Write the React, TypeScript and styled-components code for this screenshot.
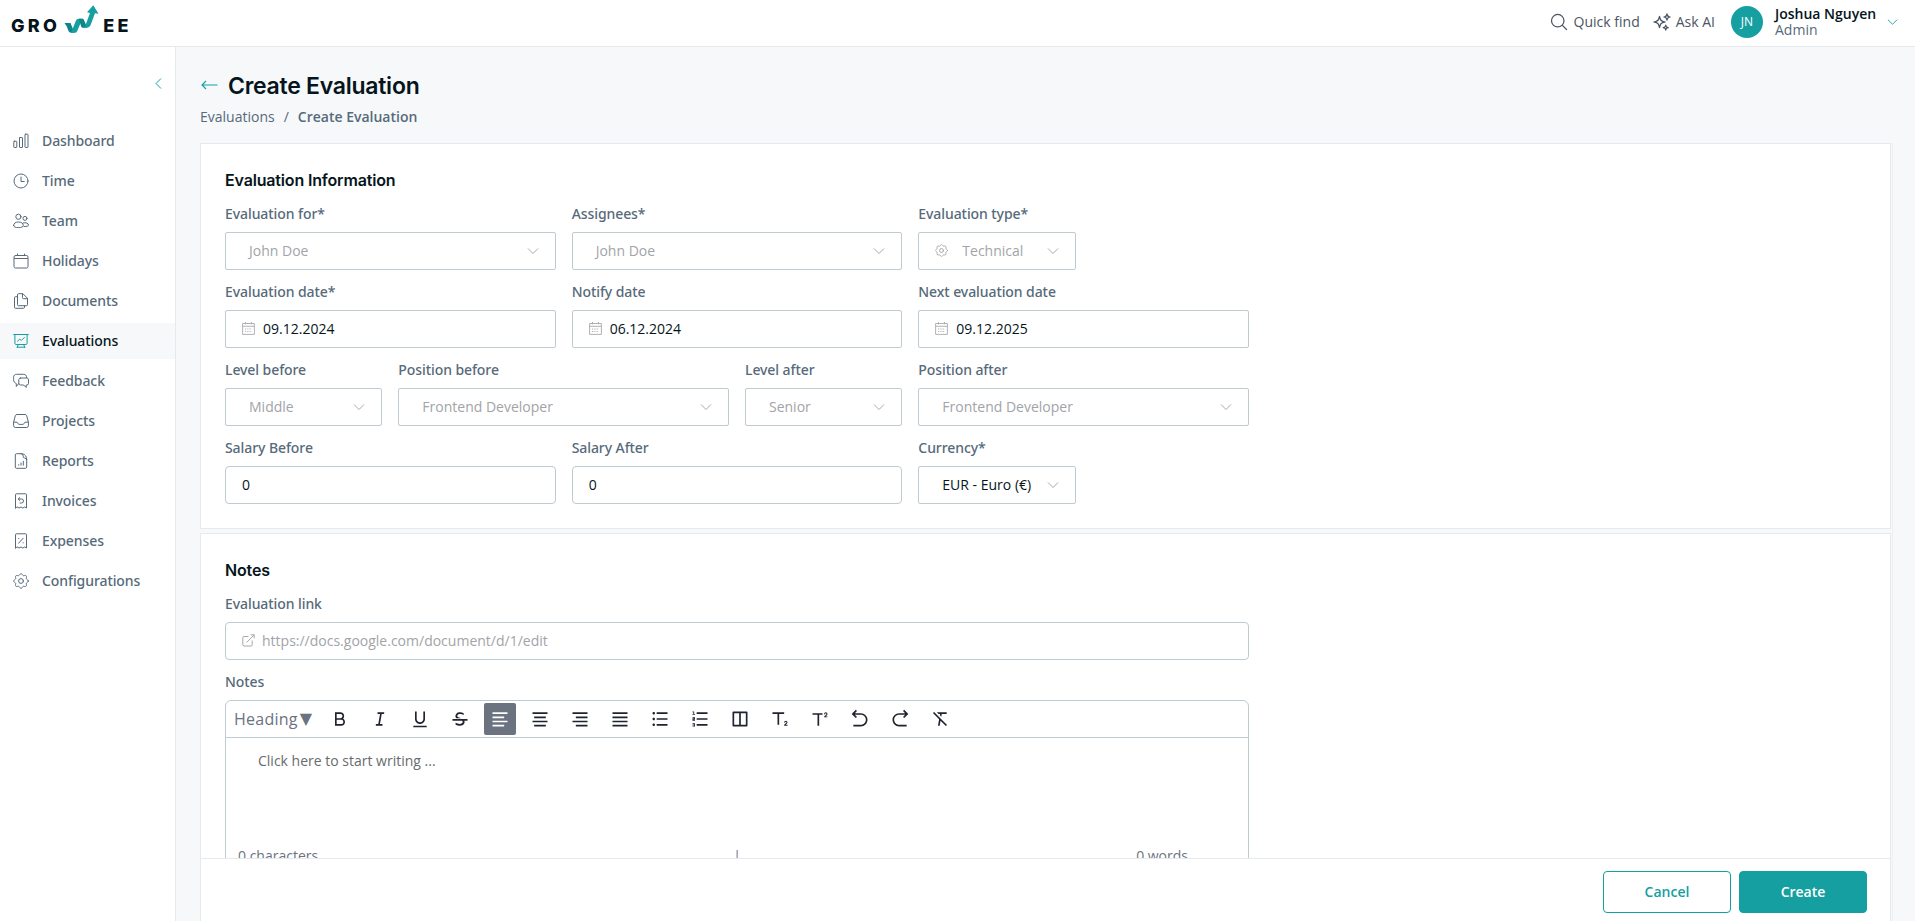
import React from "react";
import styled, { createGlobalStyle, css } from "styled-components";
import {
  RiBold, RiItalic, RiUnderline, RiStrikethrough, RiAlignLeft, RiAlignCenter, RiAlignRight,
  RiAlignJustify, RiListUnordered, RiListOrdered, RiLayoutColumnLine, RiSubscript2,
  RiSuperscript2, RiArrowGoBackLine, RiArrowGoForwardLine, RiFormatClear,
} from "react-icons/ri";
import { HiOutlineMagnifyingGlass, HiOutlineSparkles } from "react-icons/hi2";

const teal = "#159fa1";
const ink = "#06151b";
const slate = "#566a7a";
const muted = "#a2a4a8";
const line = "#bfcad1";
const hair = "#e4eaed";

const medium = css`
  font-family: "Noto Sans", "Open Sans", sans-serif;
  font-weight: 500;
  letter-spacing: -0.08px;
`;

const GlobalStyle = createGlobalStyle`
  *, *::before, *::after { box-sizing: border-box; }
  body {
    margin: 0;
    background: #f6f8fa;
    color: ${ink};
    font: 400 14px/20px "Open Sans", "Noto Sans", sans-serif;
    overflow: hidden;
  }
  svg { display: block; flex: none; }
  button, input { font: inherit; }
`;

const Page = styled.div`
  display: flex;
  flex-direction: column;
  height: 921px;
`;

const Header = styled.header`
  display: flex;
  align-items: center;
  justify-content: space-between;
  height: 47px;
  padding: 0 17px 2px 11px;
  background: #fff;
  border-bottom: 1px solid ${hair};
`;

const Logo = styled.div`
  display: flex;
  align-items: center;
  height: 44px;
  padding-top: 8px;
  font: 800 18px/20px Inter, sans-serif;
  letter-spacing: 3.3px;
  color: #06141c;
  svg { margin: -12px 3px 0 4px; }
`;

const HeaderActions = styled.div`
  display: flex;
  align-items: center;
`;

const HeaderLink = styled.button<{ $gap: number; $after: number }>`
  display: flex;
  align-items: center;
  gap: ${(p) => p.$gap}px;
  margin: 0 ${(p) => p.$after}px 0 0;
  padding: 0;
  border: 0;
  background: none;
  color: #4b5563;
`;

const Avatar = styled.div`
  display: grid;
  place-items: center;
  width: 32px;
  height: 32px;
  margin-right: 12px;
  border-radius: 50%;
  background: ${teal};
  color: #fff;
  font-size: 12px;
`;

const UserName = styled.div`
  width: 112px;
  line-height: 16px;
  color: ${slate};
  strong { display: block; font-weight: 600; color: ${ink}; white-space: nowrap; }
`;

const Body = styled.div`
  display: flex;
  flex: 1;
  min-height: 0;
`;

const Sidebar = styled.nav`
  width: 176px;
  background: #fff;
  border-right: 1px solid ${hair};
`;

const Collapse = styled.div`
  display: flex;
  justify-content: flex-end;
  height: 76px;
  padding: 31px 13px 0 0;
  color: ${teal};
`;

const NavItem = styled.a<{ $active?: boolean }>`
  display: flex;
  align-items: center;
  gap: 13px;
  height: 36px;
  margin-bottom: 4px;
  padding-left: 13px;
  ${medium}
  color: ${(p) => (p.$active ? ink : slate)};
  background: ${(p) => (p.$active ? "#f6f8fa" : "transparent")};
  svg { color: ${(p) => (p.$active ? teal : slate)}; }
`;

const Main = styled.main`
  display: flex;
  flex-direction: column;
  flex: 1;
  min-width: 0;
  padding: 24px 22px 0 24px;
`;

const TitleRow = styled.div`
  display: flex;
  align-items: center;
  gap: 10px;
  height: 28px;
  padding-left: 1px;
  color: ${teal};
`;

const Title = styled.h1`
  margin: 0;
  padding-top: 1px;
  font: 600 23px/28px Inter, sans-serif;
  letter-spacing: -0.26px;
  color: ${ink};
`;

const Breadcrumb = styled.div`
  display: flex;
  gap: 9px;
  height: 44px;
  padding-top: 8px;
  color: ${slate};
  strong { font-weight: 600; }
`;

const Panel = styled.div`
  display: flex;
  flex-direction: column;
  flex: 1;
  min-height: 0;
  padding-right: 1px;
  border-right: 1px solid #edf1f3;
`;

const Scroll = styled.div`
  flex: 1;
  min-height: 0;
  overflow: hidden;
`;

const Card = styled.section`
  margin-bottom: 4px;
  padding: 23px 24px 24px;
  background: #fff;
  border: 1px solid ${hair};
`;

const CardTitle = styled.h2`
  margin: 0 0 8px;
  font: 600 16px/26px Inter, sans-serif;
  letter-spacing: -0.16px;
`;

const Grid = styled.div`
  display: grid;
  grid-template-columns: repeat(6, 1fr);
  gap: 9px 16px;
  width: 1024px;
`;

const FieldBox = styled.div<{ $span: number; $start?: number }>`
  grid-column: ${(p) => (p.$start ? p.$start : "auto")} / span ${(p) => p.$span};
`;

const Label = styled.div`
  height: 31px;
  padding-top: 3px;
  ${medium}
  color: ${slate};
`;

const Control = styled.div<{ $left: number; $round?: boolean; $filled?: boolean }>`
  display: flex;
  align-items: center;
  height: 38px;
  padding: 0 16px 1px ${(p) => p.$left}px;
  border: 1px solid ${line};
  border-radius: ${(p) => (p.$round ? 4 : 2)}px;
  color: ${(p) => (p.$filled ? ink : muted)};
  background: #fff;
  white-space: nowrap;
  svg { color: #a7a9ad; }
`;

const Value = styled.span<{ $indent?: number }>`
  flex: 1;
  padding-left: ${(p) => p.$indent ?? 0}px;
`;

const Editor = styled.div`
  width: 1024px;
  height: 190px;
  border: 1px solid ${line};
  border-radius: 6px;
`;

const Toolbar = styled.div`
  display: flex;
  align-items: center;
  gap: 8px;
  height: 37px;
  padding-left: 8px;
  border-bottom: 1px solid ${line};
  color: #1f2330;
`;

const HeadingPicker = styled.div`
  display: flex;
  align-items: center;
  width: 82px;
  gap: 2px;
  font-size: 16px;
  letter-spacing: 0.25px;
  color: #6b7280;
  white-space: nowrap;
`;

const Caret = styled.span`
  font: 16px/20px "DejaVu Sans", sans-serif;
`;

const Tool = styled.button<{ $on?: boolean }>`
  display: grid;
  place-items: center;
  width: 32px;
  height: 32px;
  padding: 0;
  border: 0;
  border-radius: 2px;
  background: none;
  color: inherit;
  ${(p) => p.$on && css`background: #6b7280; color: #fff;`}
`;

const Writing = styled.div`
  height: 106px;
  padding: 13px 32px;
  color: #686b6e;
`;

const Counter = styled.div`
  display: flex;
  justify-content: space-between;
  padding: 2px 60px 0 12px;
  color: #6b7280;
  span:nth-child(2) { margin-left: 20px; }
`;

const Footer = styled.footer`
  display: flex;
  justify-content: flex-end;
  gap: 8px;
  height: 63px;
  padding: 12px 23px 0 0;
  background: #fff;
  border: 1px solid ${hair};
  border-bottom: 0;
`;

const Button = styled.button<{ $primary?: boolean }>`
  width: 128px;
  height: 42px;
  border: 1px solid ${teal};
  border-radius: 4px;
  font-weight: 600;
  color: ${(p) => (p.$primary ? "#fff" : teal)};
  background: ${(p) => (p.$primary ? teal : "#fff")};
`;

const Chevron = ({ width = 12 }: { width?: number }) => (
  <svg width={width} height="8" viewBox="0 0 12 8" fill="none" stroke="currentColor" strokeWidth="1">
    <path d="M1 1.500l5 5 5-5" />
  </svg>
);

/* Scalloped cog outline, built around the centre of a 16px box. */
const cogPath = (() => {
  const pts: string[] = [];
  for (let i = 0; i <= 96; i++) {
    const a = (i / 96) * Math.PI * 2;
    const r = 6.55 + 0.75 * Math.cos(8 * a);
    pts.push(`${(8 + r * Math.cos(a)).toFixed(2)} ${(8 + r * Math.sin(a)).toFixed(2)}`);
  }
  return `M${pts.join("L")}Z`;
})();

const LineIcon = ({ size = 16, children }: { size?: number; children: React.ReactNode }) => (
  <svg width={size} height={size} viewBox="0 0 16 16" fill="none" stroke="currentColor"
    strokeWidth={16 / size} strokeLinecap="round" strokeLinejoin="round">{children}</svg>
);

const Cog = ({ size = 16 }: { size?: number }) => (
  <LineIcon size={size}><path d={cogPath} /><circle cx="8" cy="8" r="2.4" /></LineIcon>
);

const receipt = "M2.5 15V1.8Q2.5.8 3.5.8h9q1 0 1 1V15l-1.8-1-1.9 1L8 14l-1.9 1-1.8-1z";

const nav: { label: string; icon: React.ReactNode; active?: boolean }[] = [
  { label: "Dashboard", icon: <LineIcon><rect x=".8" y="8.2" width="3" height="6.3" rx=".5" /><rect x="6.5" y="4.5" width="3" height="10" rx=".5" /><rect x="12" y="1.2" width="3" height="13.3" rx=".5" /></LineIcon> },
  { label: "Time", icon: <LineIcon><circle cx="8" cy="8" r="7" /><path d="M8 4v4.5h3.2" /></LineIcon> },
  { label: "Team", icon: <LineIcon><circle cx="5.4" cy="3.8" r="2.6" /><circle cx="12" cy="5.4" r="2" /><path d="M.6 12.5C.6 10.2 2.6 9 5.4 9s4.9 1.200 4.900 3.500c0 1.400-1.800 2.100-4.900 2.100S.6 13.900.6 12.500z" /><path d="M10.200 9.900c3-.7 5.300.4 5.300 2.300 0 .9-1.500 1.400-4.400 1.300" /></LineIcon> },
  { label: "Holidays", icon: <LineIcon><rect x="1" y="2.500" width="14" height="12.500" rx="1.500" /><path d="M1.500 5.500h13M4.500 1v1.500M11.500 1v1.500" /></LineIcon> },
  { label: "Documents", icon: <LineIcon><path d="M9.500.7h-4q-1 0-1 1v10q0 1 1 1h8q1 0 1-1v-6zM9.500.7v4q0 1 1 1h4" /><path d="M4.500 3.700H2.500q-1 0-1 1v9.600q0 1 1 1h8q1 0 1-1v-1.500" /></LineIcon> },
  { label: "Evaluations", active: true, icon: <LineIcon><path d="M.7 1.500h14.600M1.900 1.500v8.800q0 1.200 1.200 1.200h9.800q1.200 0 1.200-1.200V1.500M4.500 8.200l2.200-2 1.700 1.200 3-3M5.200 11.800l-1 2.700M10.800 11.800l1 2.700M4.200 14.200h7.600" /></LineIcon> },
  { label: "Feedback", icon: <LineIcon><path d="M5.800 10.500l-2.500 3v-3C1.500 9.800.6 8.700.6 6.500v-2C.6 2.300 1.700 1.300 3.700 1.300h7c1.800 0 2.900 1 2.900 3.300" /><path d="M7.500 5h6.300q1.700 0 1.700 1.700v3.600q0 1.700-1.700 1.700h-.6v2.500L10.700 12H7.500q-1.700 0-1.700-1.700V6.700Q5.800 5 7.500 5z" /></LineIcon> },
  { label: "Projects", icon: <LineIcon><path d="M.6 9.200l1.700-6.500Q2.700 1.500 4 1.500h8q1.300 0 1.700 1.200l1.700 6.500v3.600q0 1.700-1.700 1.700H2.300Q.6 14.500.6 12.800zM.6 9.200H4l1.200 1.700q.3.500 1 .5h3.600q.7 0 1-.5L12 9.200h3.400" /></LineIcon> },
  { label: "Reports", icon: <LineIcon><path d="M8 .7H3.500q-1.200 0-1.200 1.200v12.200q0 1.200 1.200 1.200h9q1.200 0 1.200-1.200V6.400M8 .7h1.500q4.200 1.300 4.200 5.700M8.500.8q2 .5 1.800 3 0 1.200 1.200 1.200 1.900.1 2.200 1.500" /><path d="M5.700 11.700v.5M8 10v2.200M10.300 8.200v4" /></LineIcon> },
  { label: "Invoices", icon: <LineIcon><path d={receipt} /><path d="M6.800 4.500L5.200 6l1.600 1.500M5.400 6h3.200Q10.500 6 10.500 8t-1.900 2H7" /></LineIcon> },
  { label: "Expenses", icon: <LineIcon><path d={receipt} /><path d="M10.200 5.200l-4.600 5M5.700 5.600h.2M10.100 9.800h.2" /></LineIcon> },
  { label: "Configurations", icon: <Cog /> },
];

const CalendarIcon = () => (
  <svg width="13" height="13" viewBox="0 0 13 13" fill="none" stroke="currentColor" strokeWidth=".9">
    <path d="M.6 1.500h11.800v10.900H.6zM.6 4.300h11.800M3.500 0v2.300M9.500 0v2.300" />
    <path d="M3 7h7M3 9.500h7" strokeDasharray="1.200 1.100" />
  </svg>
);

const ExternalIcon = () => (
  <svg width="13" height="13" viewBox="0 0 13 13" fill="none" stroke="currentColor" strokeWidth="1">
    <path d="M6.500 2.500H2q-1.200 0-1.200 1.200v7.100Q.8 12 2 12h7q1.200 0 1.200-1.200V6.500M4.500 8.500l7.700-7.700M8.700.8h3.500v3.500" />
  </svg>
);

type FieldProps = { label: string; value: string; span: number; start?: number; kind?: "select" | "date" | "text"; filled?: boolean; cog?: boolean };

const Field = ({ label, value, span, start, kind = "select", filled, cog }: FieldProps) => (
  <FieldBox $span={span} $start={start}>
    <Label>{label}</Label>
    <Control $left={kind === "select" && !cog ? 23 : 16} $round={kind === "text"} $filled={filled}>
      {cog && <Cog size={13} />}
      {kind === "date" && <CalendarIcon />}
      <Value $indent={cog ? 14 : kind === "date" ? 8 : 0}>{value}</Value>
      {kind === "select" && <Chevron />}
    </Control>
  </FieldBox>
);

const tools = [
  RiBold, RiItalic, RiUnderline, RiStrikethrough, RiAlignLeft, RiAlignCenter, RiAlignRight, RiAlignJustify,
  RiListUnordered, RiListOrdered, RiLayoutColumnLine, RiSubscript2, RiSuperscript2,
  RiArrowGoBackLine, RiArrowGoForwardLine, RiFormatClear,
];

export default function App() {
  return (
    <Page>
      <GlobalStyle />
      <Header>
        <Logo>
          GRO
          <svg width="36" height="30" viewBox="0 0 36 30">
            <path d="M.5 18H6.500l4 9.800H7Q5.300 27.800 4.500 26L2.800 21.500z" fill="#0f8587" />
            <path d="M7 27.800L12 15.500q.7-1.700 2.500-1.700h4L13 26.500q-.5 1.300-2 1.300z" fill={teal} />
            <path d="M15 13.800h3.500q1 0 1.400 1l3.400 8H19q-1.400 0-1.900-1.200z" fill="#0f8587" />
            <path d="M18.500 22.800q1.800 0 2.700-1.800L26 8l-3-.8L29.300.2 34.500 8.800 31 8.300 26.800 19.500q-1.300 3.300-4.300 3.300z" fill={teal} />
          </svg>
          EE
        </Logo>
        <HeaderActions>
          <HeaderLink $gap={5} $after={12}><HiOutlineMagnifyingGlass size={20} />Quick find</HeaderLink>
          <HeaderLink $gap={4} $after={16}><HiOutlineSparkles size={20} />Ask AI</HeaderLink>
          <Avatar>JN</Avatar>
          <UserName><strong>Joshua Nguyen</strong>Admin</UserName>
          <svg width="11" height="8" viewBox="0 0 12 8" fill="none" stroke={teal}><path d="M1 1.500l5 5 5-5" /></svg>
        </HeaderActions>
      </Header>
      <Body>
        <Sidebar>
          <Collapse>
            <svg width="7" height="11" viewBox="0 0 7 11" fill="none" stroke="currentColor"><path d="M6 .5l-5 5 5 5" /></svg>
          </Collapse>
          {nav.map((n) => (
            <NavItem key={n.label} $active={n.active}>{n.icon}{n.label}</NavItem>
          ))}
        </Sidebar>
        <Main>
          <TitleRow>
            <svg width="17" height="10" viewBox="0 0 17 10" fill="none" stroke="currentColor" strokeWidth="1.100"><path d="M16.500 5H1M5 1L1 5l4 4" /></svg>
            <Title>Create Evaluation</Title>
          </TitleRow>
          <Breadcrumb><span>Evaluations</span><span>/</span><strong>Create Evaluation</strong></Breadcrumb>
          <Panel>
            <Scroll>
              <Card>
                <CardTitle>Evaluation Information</CardTitle>
                <Grid>
                  <Field label="Evaluation for*" value="John Doe" span={2} />
                  <Field label="Assignees*" value="John Doe" span={2} />
                  <Field label="Evaluation type*" value="Technical" span={1} cog />
                  <Field label="Evaluation date*" value="09.12.2024" span={2} start={1} kind="date" filled />
                  <Field label="Notify date" value="06.12.2024" span={2} kind="date" filled />
                  <Field label="Next evaluation date" value="09.12.2025" span={2} kind="date" filled />
                  <Field label="Level before" value="Middle" span={1} />
                  <Field label="Position before" value="Frontend Developer" span={2} />
                  <Field label="Level after" value="Senior" span={1} />
                  <Field label="Position after" value="Frontend Developer" span={2} />
                  <Field label="Salary Before" value="0" span={2} kind="text" filled />
                  <Field label="Salary After" value="0" span={2} kind="text" filled />
                  <Field label="Currency*" value="EUR - Euro (€)" span={1} filled />
                </Grid>
              </Card>
              <Card>
                <CardTitle>Notes</CardTitle>
                <Grid>
                  <FieldBox $span={6}>
                    <Label>Evaluation link</Label>
                    <Control $left={16} $round>
                      <ExternalIcon />
                      <Value $indent={7}>https://docs.google.com/document/d/1/edit</Value>
                    </Control>
                  </FieldBox>
                  <FieldBox $span={6}>
                    <Label>Notes</Label>
                    <Editor>
                      <Toolbar>
                        <HeadingPicker><span>Heading</span><Caret>▼</Caret></HeadingPicker>
                        {tools.map((Icon, i) => (
                          <Tool key={i} $on={Icon === RiAlignLeft}><Icon size={20} /></Tool>
                        ))}
                      </Toolbar>
                      <Writing>Click here to start writing ...</Writing>
                      <Counter><span>0 characters</span><span>|</span><span>0 words</span></Counter>
                    </Editor>
                  </FieldBox>
                </Grid>
              </Card>
            </Scroll>
            <Footer>
              <Button>Cancel</Button>
              <Button $primary>Create</Button>
            </Footer>
          </Panel>
        </Main>
      </Body>
    </Page>
  );
}
